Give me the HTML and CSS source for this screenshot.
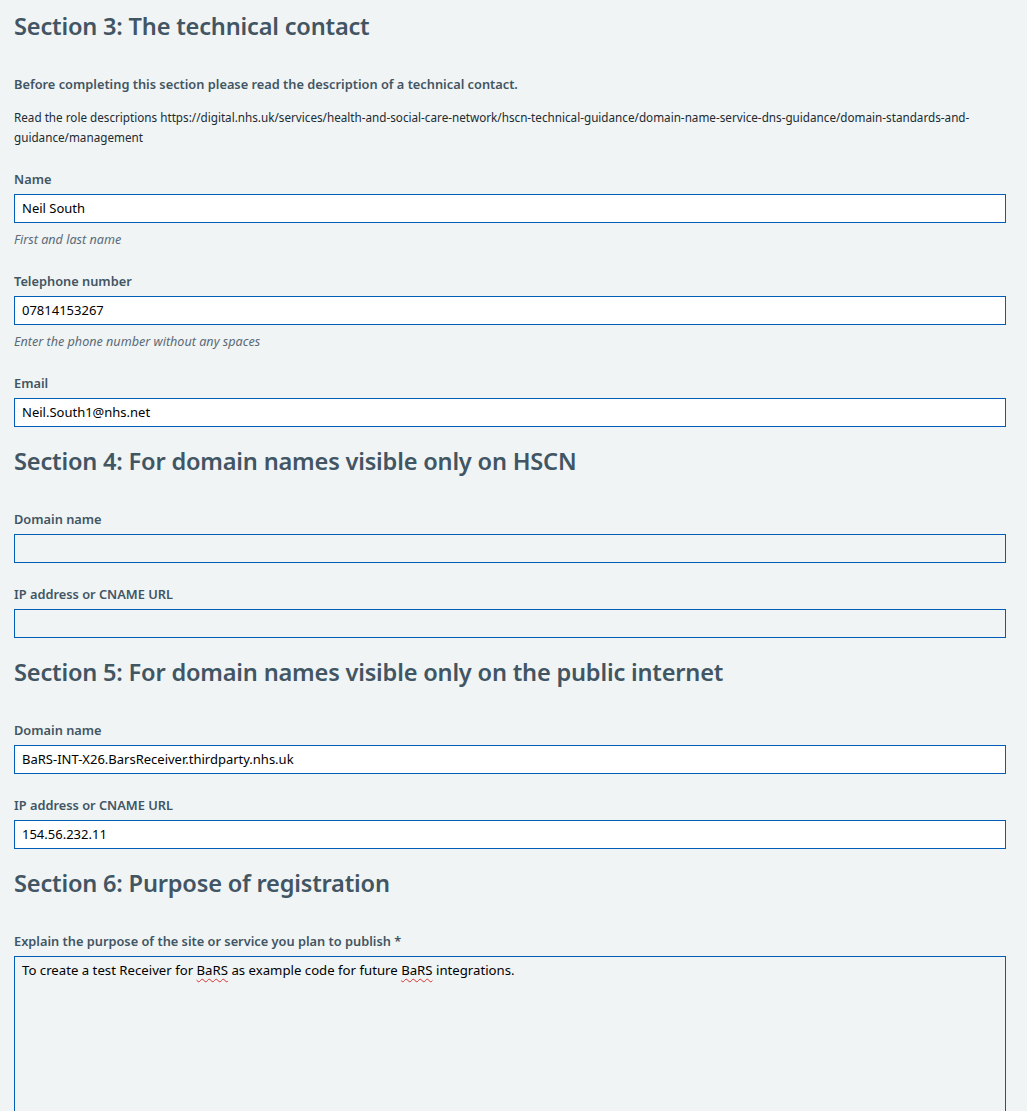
FILE: index.html
```html
<!DOCTYPE html>
<html lang="en">
<head>
<meta charset="utf-8">
<title>Domain registration</title>
<link rel="stylesheet" href="styles.css">
</head>
<body>
<main class="page">
  <section class="section">
    <h2 class="heading">Section 3: The technical contact</h2>
    <p class="lead">Before completing this section please read the description of a technical contact.</p>
    <p class="body">Read the role descriptions https://digital.nhs.uk/services/health-and-social-care-network/hscn-technical-guidance/domain-name-service-dns-guidance/domain-standards-and-guidance/management</p>
    <div class="field has-hint">
      <label class="label">Name</label>
      <input class="input filled" type="text" value="Neil South">
      <div class="hint">First and last name</div>
    </div>
    <div class="field has-hint">
      <label class="label">Telephone number</label>
      <input class="input filled" type="text" value="07814153267">
      <div class="hint">Enter the phone number without any spaces</div>
    </div>
    <div class="field">
      <label class="label">Email</label>
      <input class="input filled" type="text" value="Neil.South1@nhs.net">
    </div>
  </section>
  <section class="section">
    <h2 class="heading">Section 4: For domain names visible only on HSCN</h2>
    <div class="field">
      <label class="label">Domain name</label>
      <input class="input" type="text" value="">
    </div>
    <div class="field">
      <label class="label">IP address or CNAME URL</label>
      <input class="input" type="text" value="">
    </div>
  </section>
  <section class="section">
    <h2 class="heading">Section 5: For domain names visible only on the public internet</h2>
    <div class="field">
      <label class="label">Domain name</label>
      <input class="input filled" type="text" value="BaRS-INT-X26.BarsReceiver.thirdparty.nhs.uk">
    </div>
    <div class="field">
      <label class="label">IP address or CNAME URL</label>
      <input class="input filled" type="text" value="154.56.232.11">
    </div>
  </section>
  <section class="section">
    <h2 class="heading">Section 6: Purpose of registration</h2>
    <div class="field">
      <label class="label">Explain the purpose of the site or service you plan to publish *</label>
      <div class="textarea" role="textbox" aria-multiline="true">To create a test Receiver for <span class="misspelt">BaRS</span> as example code for future <span class="misspelt">BaRS</span> integrations.</div>
    </div>
  </section>
</main>
</body>
</html>
```
FILE: styles.css
```css
html, body {
  margin: 0;
  padding: 0;
  background: #f0f4f5;
}
body {
  font-family: "Noto Sans", "Open Sans", Arial, sans-serif;
  color: #425563;
}
.page {
  padding: 10px 21px 0 14px;
}
.section {
  margin-top: 18px;
}
.section:first-child {
  margin-top: 0;
}
.heading {
  margin: 0 0 33px;
  font-size: 23.6px;
  line-height: 32px;
  font-weight: 600;
  color: #425563;
  letter-spacing: -0.2px;
}
.lead {
  margin: -1px 0 13px;
  font-size: 12.8px;
  line-height: 20px;
  font-weight: 600;
  color: #425563;
}
.body {
  margin: 0 0 23px;
  font-size: 11.7px;
  line-height: 20px;
  color: #212b32;
}
.field {
  display: flex;
  flex-direction: column;
  margin-bottom: 22px;
}
.field.has-hint {
  margin-bottom: 24px;
}
.section .field:last-child {
  margin-bottom: 0;
}
.label {
  display: block;
  margin-bottom: 6px;
  font-size: 12.8px;
  line-height: 18px;
  font-weight: 600;
  color: #425563;
}
.input {
  box-sizing: border-box;
  width: 100%;
  height: 29px;
  margin: 0;
  padding: 0 7px 2px;
  border: 1px solid #005eb8;
  border-radius: 0;
  background: transparent;
  font-family: "Noto Sans", "Open Sans", Arial, sans-serif;
  font-size: 13px;
  color: #000;
  outline: none;
}
.input.filled {
  background: #fff;
}
.hint {
  margin-top: 9px;
  font-size: 12.6px;
  line-height: 16px;
  font-style: italic;
  color: #5b6b77;
}
.textarea {
  box-sizing: border-box;
  width: 100%;
  height: 170px;
  padding: 3px 7px;
  border: 1px solid #005eb8;
  font-size: 13.2px;
  line-height: 20px;
  color: #000;
}
.misspelt {
  text-decoration: underline wavy #e03030;
  text-decoration-thickness: 1px;
  text-underline-offset: 3px;
}
```
